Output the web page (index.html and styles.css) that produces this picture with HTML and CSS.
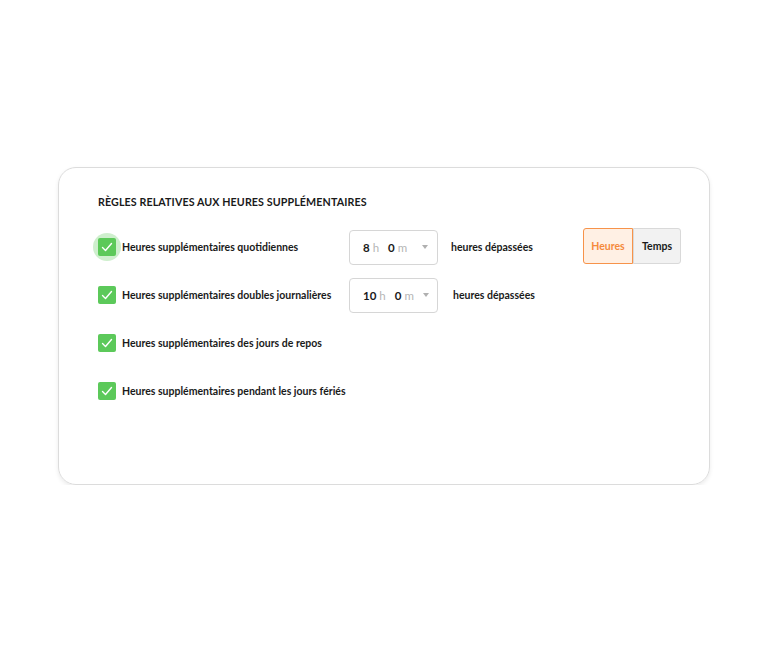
FILE: index.html
```html
<!DOCTYPE html>
<html>
<head>
<link rel="stylesheet" href="styles.css">
</head>
<body>

<div class="card">
  <h3 class="card-title">Règles relatives aux heures supplémentaires</h3>

  <div class="rule">
    <span class="check focus"><svg viewBox="0 0 18 18"><path d="M4.5 9.5l3 3 6-7"/></svg></span>
    <span class="label">Heures supplémentaires quotidiennes</span>
    <div class="duration">
      <b>8</b><i>h</i><b>0</b><i>m</i>
      <span class="caret"></span>
    </div>
    <span class="after">heures dépassées</span>
    <div class="toggle">
      <a href="javascript:void(0)" class="on">Heures</a>
      <a href="javascript:void(0)">Temps</a>
    </div>
  </div>

  <div class="rule">
    <span class="check"><svg viewBox="0 0 18 18"><path d="M4.5 9.5l3 3 6-7"/></svg></span>
    <span class="label">Heures supplémentaires doubles journalières</span>
    <div class="duration">
      <b>10</b><i>h</i><b>0</b><i>m</i>
      <span class="caret"></span>
    </div>
    <span class="after second">heures dépassées</span>
  </div>

  <div class="rule">
    <span class="check"><svg viewBox="0 0 18 18"><path d="M4.5 9.5l3 3 6-7"/></svg></span>
    <span class="label">Heures supplémentaires des jours de repos</span>
  </div>

  <div class="rule">
    <span class="check"><svg viewBox="0 0 18 18"><path d="M4.5 9.5l3 3 6-7"/></svg></span>
    <span class="label">Heures supplémentaires pendant les jours fériés</span>
  </div>
</div>

</body>
</html>
```

FILE: styles.css
```css
body {
  margin: 0;
  padding: 167px 58px 0;
  background: #fff;
  font-family: "Lato", "Noto Sans", sans-serif;
  color: #1a1a1a;
}

.card {
  height: 318px;
  box-sizing: border-box;
  border: 1px solid #dcdcdc;
  border-radius: 18px;
  box-shadow: 0 2px 4px rgba(0,0,0,0.08);
  padding: 27px 28px 0 39px;
}

.card-title {
  margin: 0 0 15px;
  font-size: 10.7px;
  font-weight: 700;
  text-transform: uppercase;
  letter-spacing: 0.1px;
}

.rule {
  display: flex;
  align-items: center;
  height: 48px;
}

.check {
  position: relative;
  width: 18px;
  height: 18px;
  border-radius: 2px;
  background: #5cc95a;
  flex: none;
}

.check svg {
  position: relative;
  display: block;
  width: 18px;
  height: 18px;
  fill: none;
  stroke: #fff;
  stroke-width: 1.4;
  stroke-linecap: round;
  stroke-linejoin: round;
}

.check.focus::before {
  content: "";
  position: absolute;
  left: -5px;
  top: -5px;
  width: 28px;
  height: 28px;
  border-radius: 50%;
  background: rgba(92, 201, 90, 0.3);
}

.label {
  width: 227px;
  margin-left: 6px;
  font-size: 10.5px;
  font-weight: 700;
  flex: none;
}

.duration {
  display: flex;
  align-items: center;
  width: 89px;
  height: 35px;
  box-sizing: border-box;
  border: 1px solid #d6d6d6;
  border-radius: 4px;
  padding: 0 9px 0 13px;
  font-size: 11.5px;
  flex: none;
}

.duration b {
  font-weight: 700;
}

.duration i {
  font-style: normal;
  color: #b5b5b5;
  margin: 0 9px 0 3px;
}

.caret {
  margin-left: auto;
  width: 0;
  height: 0;
  border-left: 3.5px solid transparent;
  border-right: 3.5px solid transparent;
  border-top: 4px solid #b0b0b0;
}

.after {
  margin-left: 13px;
  font-size: 10.5px;
  font-weight: 700;
}

.after.second {
  margin-left: 15px;
}

.toggle {
  display: flex;
  margin-left: auto;
  margin-top: -2px;
}

.toggle a {
  display: inline-block;
  width: 48px;
  height: 36px;
  line-height: 34px;
  box-sizing: border-box;
  text-align: center;
  font-size: 10.5px;
  font-weight: 700;
  text-decoration: none;
  color: #1a1a1a;
  background: #f2f2f2;
  border: 1px solid #d9d9d9;
  border-radius: 0 3px 3px 0;
}

.toggle a.on {
  width: 50px;
  color: #f58a3c;
  background: #fff0e4;
  border: 1.5px solid #f7934a;
  border-radius: 3px 0 0 3px;
}
```
